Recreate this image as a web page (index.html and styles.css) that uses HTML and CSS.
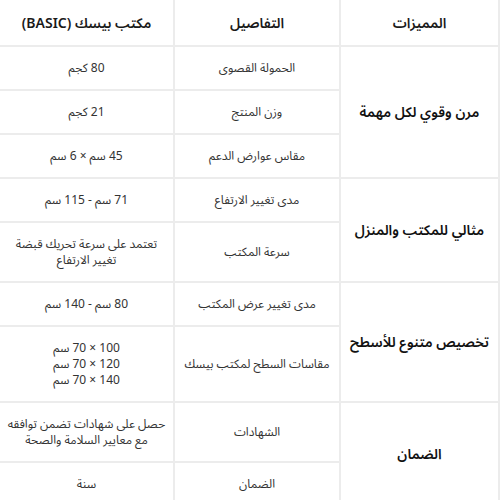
FILE: index.html
```html
<!DOCTYPE html>
<html lang="ar" dir="rtl">
<head>
<meta charset="utf-8">
<link rel="stylesheet" href="styles.css">
</head>
<body>
<table class="spec">
  <thead>
    <tr>
      <th class="c-feat">المميزات</th>
      <th class="c-det">التفاصيل</th>
      <th class="c-val">مكتب بيسك (BASIC)</th>
    </tr>
  </thead>
  <tbody>
    <tr>
      <td class="feat" rowspan="3">مرن وقوي لكل مهمة</td>
      <td>الحمولة القصوى</td>
      <td>80 كجم</td>
    </tr>
    <tr>
      <td>وزن المنتج</td>
      <td>21 كجم</td>
    </tr>
    <tr>
      <td>مقاس عوارض الدعم</td>
      <td>45 سم × 6 سم</td>
    </tr>
    <tr>
      <td class="feat" rowspan="2">مثالي للمكتب والمنزل</td>
      <td>مدى تغيير الارتفاع</td>
      <td>71 سم - 115 سم</td>
    </tr>
    <tr>
      <td>سرعة المكتب</td>
      <td>تعتمد على سرعة تحريك قبضة<br>تغيير الارتفاع</td>
    </tr>
    <tr>
      <td class="feat" rowspan="2">تخصيص متنوع للأسطح</td>
      <td>مدى تغيير عرض المكتب</td>
      <td>80 سم - 140 سم</td>
    </tr>
    <tr>
      <td>مقاسات السطح لمكتب بيسك</td>
      <td>100 × 70 سم<br>120 × 70 سم<br>140 × 70 سم</td>
    </tr>
    <tr>
      <td class="feat" rowspan="2">الضمان</td>
      <td>الشهادات</td>
      <td>حصل على شهادات تضمن توافقه<br>مع معايير السلامة والصحة</td>
    </tr>
    <tr>
      <td>الضمان</td>
      <td>سنة</td>
    </tr>
  </tbody>
</table>
</body>
</html>
```
FILE: styles.css
```css
html, body {
  margin: 0;
  padding: 0;
  background: #fff;
}
body {
  font-family: "Noto Sans", "Noto Sans Arabic", "DejaVu Sans", sans-serif;
  color: #333;
}
.spec {
  width: 500px;
  border-collapse: collapse;
  table-layout: fixed;
}
.spec th, .spec td {
  border: 2px solid #ececec;
  text-align: center;
  vertical-align: middle;
  padding: 13px 6px;
  font-size: 12px;
  line-height: 16px;
  font-weight: normal;
  white-space: nowrap;
}
.spec th {
  border-top: none;
  font-size: 14px;
  font-weight: 600;
  color: #1a1a1a;
  height: 19px;
}
.c-feat { width: 145px; }
.c-det { width: 152px; }
.c-val { width: 161px; }
.spec td.feat {
  font-size: 14px;
  font-weight: 600;
  color: #111;
}
```
